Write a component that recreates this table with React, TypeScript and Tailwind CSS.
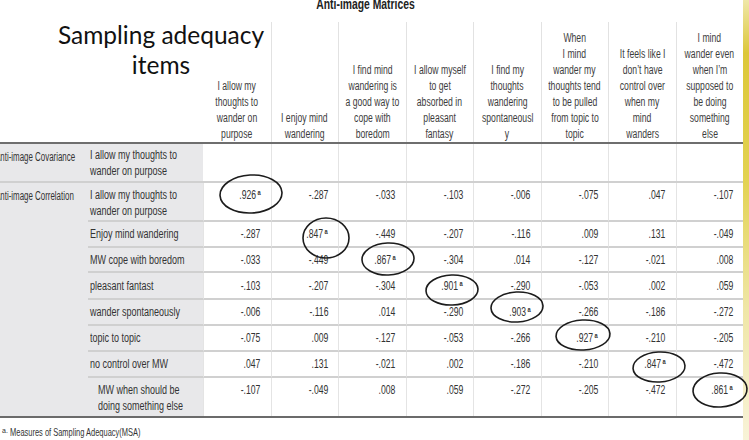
import React from 'react';

type Row = {
  label: string[];
  values: string[];
  diag: number;
  h: string;
  tall?: boolean;
  indent?: boolean;
};

const headers: string[][] = [
  ['I allow my', 'thoughts to', 'wander on', 'purpose'],
  ['I enjoy mind', 'wandering'],
  ['I find mind', 'wandering is', 'a good way to', 'cope with', 'boredom'],
  ['I allow myself', 'to get', 'absorbed in', 'pleasant', 'fantasy'],
  ['I find my', 'thoughts', 'wandering', 'spontaneousl', 'y'],
  ['When', 'I mind', 'wander my', 'thoughts tend', 'to be pulled', 'from topic to', 'topic'],
  ['It feels like I', 'don\u2019t have', 'control over', 'when my', 'mind', 'wanders'],
  ['I mind', 'wander even', 'when I\u2019m', 'supposed to', 'be doing', 'something', 'else'],
];

const rows: Row[] = [
  { label: ['I allow my thoughts to', 'wander on purpose'], values: ['.926', '-.287', '-.033', '-.103', '-.006', '-.075', '.047', '-.107'], diag: 0, h: 'h-[39px]', tall: true },
  { label: ['Enjoy mind wandering'], values: ['-.287', '.847', '-.449', '-.207', '-.116', '.009', '.131', '-.049'], diag: 1, h: 'h-[26px]' },
  { label: ['MW cope with boredom'], values: ['-.033', '-.449', '.867', '-.304', '.014', '-.127', '-.021', '.008'], diag: 2, h: 'h-[25px]' },
  { label: ['pleasant fantast'], values: ['-.103', '-.207', '-.304', '.901', '-.290', '-.053', '.002', '.059'], diag: 3, h: 'h-[27px]' },
  { label: ['wander spontaneously'], values: ['-.006', '-.116', '.014', '-.290', '.903', '-.266', '-.186', '-.272'], diag: 4, h: 'h-[26px]' },
  { label: ['topic to topic'], values: ['-.075', '.009', '-.127', '-.053', '-.266', '.927', '-.210', '-.205'], diag: 5, h: 'h-[26px]' },
  { label: ['no control over MW'], values: ['.047', '.131', '-.021', '.002', '-.186', '-.210', '.847', '-.472'], diag: 6, h: 'h-[26px]' },
  { label: ['MW when should be', 'doing something else'], values: ['-.107', '-.049', '.008', '.059', '-.272', '-.205', '-.472', '.861'], diag: 7, h: 'h-[38px]', tall: true, indent: true },
];

// hand drawn rings around the MSA diagonal
const rings = [
  { cx: 251, cy: 194, rx: 31, ry: 19, r: -3 },
  { cx: 326, cy: 238, rx: 23, ry: 20, r: 0 },
  { cx: 388, cy: 259, rx: 26, ry: 16, r: -2 },
  { cx: 452, cy: 290, rx: 26, ry: 15, r: -2 },
  { cx: 517, cy: 307, rx: 26, ry: 15, r: -3 },
  { cx: 583, cy: 335, rx: 27, ry: 15, r: -3 },
  { cx: 659, cy: 367, rx: 26, ry: 15, r: -3 },
  { cx: 720, cy: 390, rx: 27, ry: 17, r: -3 },
];

function Value({ v, msa, tall, last }: { v: string; msa: boolean; tall?: boolean; last: boolean }) {
  return (
    <div
      className={`flex justify-end pr-[10px] border-l border-[#e4e4e4] first:border-l-0 ${
        tall ? 'items-start pt-[4px]' : 'items-center'
      } ${last ? '' : 'border-b-2 border-b-[#d0d0d0]'}`}
    >
      <span className="inline-block origin-right scale-x-[0.72] whitespace-nowrap leading-[16px]">
        {v}
        {msa && <sup className="ml-[2px] text-[8px] font-bold">a</sup>}
      </span>
    </div>
  );
}

export default function App() {
  return (
    <div className="relative w-[749px] h-[440px] overflow-hidden bg-white font-['Liberation_Sans',Arial,sans-serif] text-[12px] text-[#333]">
      <div className="flex">
        <div className="w-[743px] shrink-0">
          <div className="h-[22px] flex justify-center pr-[12px]">
            <span className="-mt-[3px] inline-block scale-x-[0.74] font-bold text-[14px] leading-[14px] text-[#222] whitespace-nowrap">
              Anti-image Matrices
            </span>
          </div>

          {/* header */}
          <div className="grid grid-cols-[88px_115px_repeat(8,67.5px)] h-[122px] border-b-2 border-[#6e6e6e]">
            <div className="col-span-2">
              <div className="-mt-[2px] ml-[54px] w-[214px] text-center whitespace-nowrap font-['Lato','Open_Sans',sans-serif] text-[24.5px] leading-[30px] text-[#111]">
                Sampling adequacy
                <br />
                items
              </div>
            </div>
            {headers.map((lines, i) => (
              <div
                key={i}
                className={`flex flex-col justify-end items-center text-[#3d3d3d] ${i > 0 ? 'border-l border-[#e2e2e2]' : ''}`}
              >
                {lines.map((l, j) => (
                  <span key={j} className="inline-block scale-x-[0.72] whitespace-nowrap leading-[16px]">
                    {l}
                  </span>
                ))}
              </div>
            ))}
          </div>

          {/* covariance block */}
          <div className="grid grid-cols-[88px_115px_repeat(8,67.5px)] h-[39px] border-b-2 border-[#d0d0d0]">
            <div className="bg-[#e8e8ea] pt-[4px]">
              <span className="-ml-[5px] inline-block origin-left scale-x-[0.66] whitespace-nowrap leading-[16px]">
                Anti-image Covariance
              </span>
            </div>
            <div className="bg-[#e8e8ea] pt-[3px] pl-[2px]">
              <span className="inline-block origin-left scale-x-[0.75] whitespace-nowrap leading-[16px]">
                I allow my thoughts to
                <br />
                wander on purpose
              </span>
            </div>
            {headers.map((_, i) => (
              <div key={i} className={i > 0 ? 'border-l border-[#e4e4e4]' : ''} />
            ))}
          </div>

          {/* correlation block */}
          <div className="flex">
            <div className="w-[88px] shrink-0 bg-[#e8e8ea] pt-[4px]">
              <span className="-ml-[5px] inline-block origin-left scale-x-[0.66] whitespace-nowrap leading-[16px]">
                Anti-image Correlation
              </span>
            </div>
            <div className="flex-1">
              {rows.map((r, ri) => {
                const last = ri === rows.length - 1;
                return (
                  <div key={ri} className={`grid grid-cols-[115px_repeat(8,67.5px)] ${r.h}`}>
                    <div
                      className={`bg-[#e8e8ea] flex ${r.tall ? 'items-start pt-[4px]' : 'items-center'} ${
                        r.indent ? 'pl-[10px]' : 'pl-[2px]'
                      } ${last ? '' : 'border-b-2 border-[#d0d0d0]'}`}
                    >
                      <span className="inline-block origin-left scale-x-[0.75] whitespace-nowrap leading-[16px]">
                        {r.label.map((l, j) => (
                          <React.Fragment key={j}>
                            {j > 0 && <br />}
                            {l}
                          </React.Fragment>
                        ))}
                      </span>
                    </div>
                    {r.values.map((v, vi) => (
                      <Value key={vi} v={v} msa={vi === r.diag} tall={r.tall} last={last} />
                    ))}
                  </div>
                );
              })}
            </div>
          </div>

          <div className="h-[2px] bg-[#6b6b6b]" />

          <div className="mt-[7px] pl-[2px] flex items-start text-[#333]">
            <span className="text-[7px] leading-[10px] mt-[1px]">a.</span>
            <span className="ml-[2px] inline-block origin-left scale-x-[0.65] whitespace-nowrap text-[11.5px] leading-[14px]">
              Measures of Sampling Adequacy(MSA)
            </span>
          </div>
        </div>

        <div className="w-[6px] h-[440px] shrink-0 bg-[linear-gradient(to_bottom,#efe7a8_0%,#dcc73a_12%,#e2d250_40%,#efe6a6_70%,#f8f3d8_100%)]" />
      </div>

      <svg className="absolute inset-0 pointer-events-none" width="749" height="440" viewBox="0 0 749 440">
        {rings.map((e, i) => (
          <ellipse
            key={i}
            cx={e.cx}
            cy={e.cy}
            rx={e.rx}
            ry={e.ry}
            transform={`rotate(${e.r} ${e.cx} ${e.cy})`}
            fill="none"
            stroke="#1c1c1c"
            strokeWidth="1.6"
          />
        ))}
      </svg>
    </div>
  );
}
